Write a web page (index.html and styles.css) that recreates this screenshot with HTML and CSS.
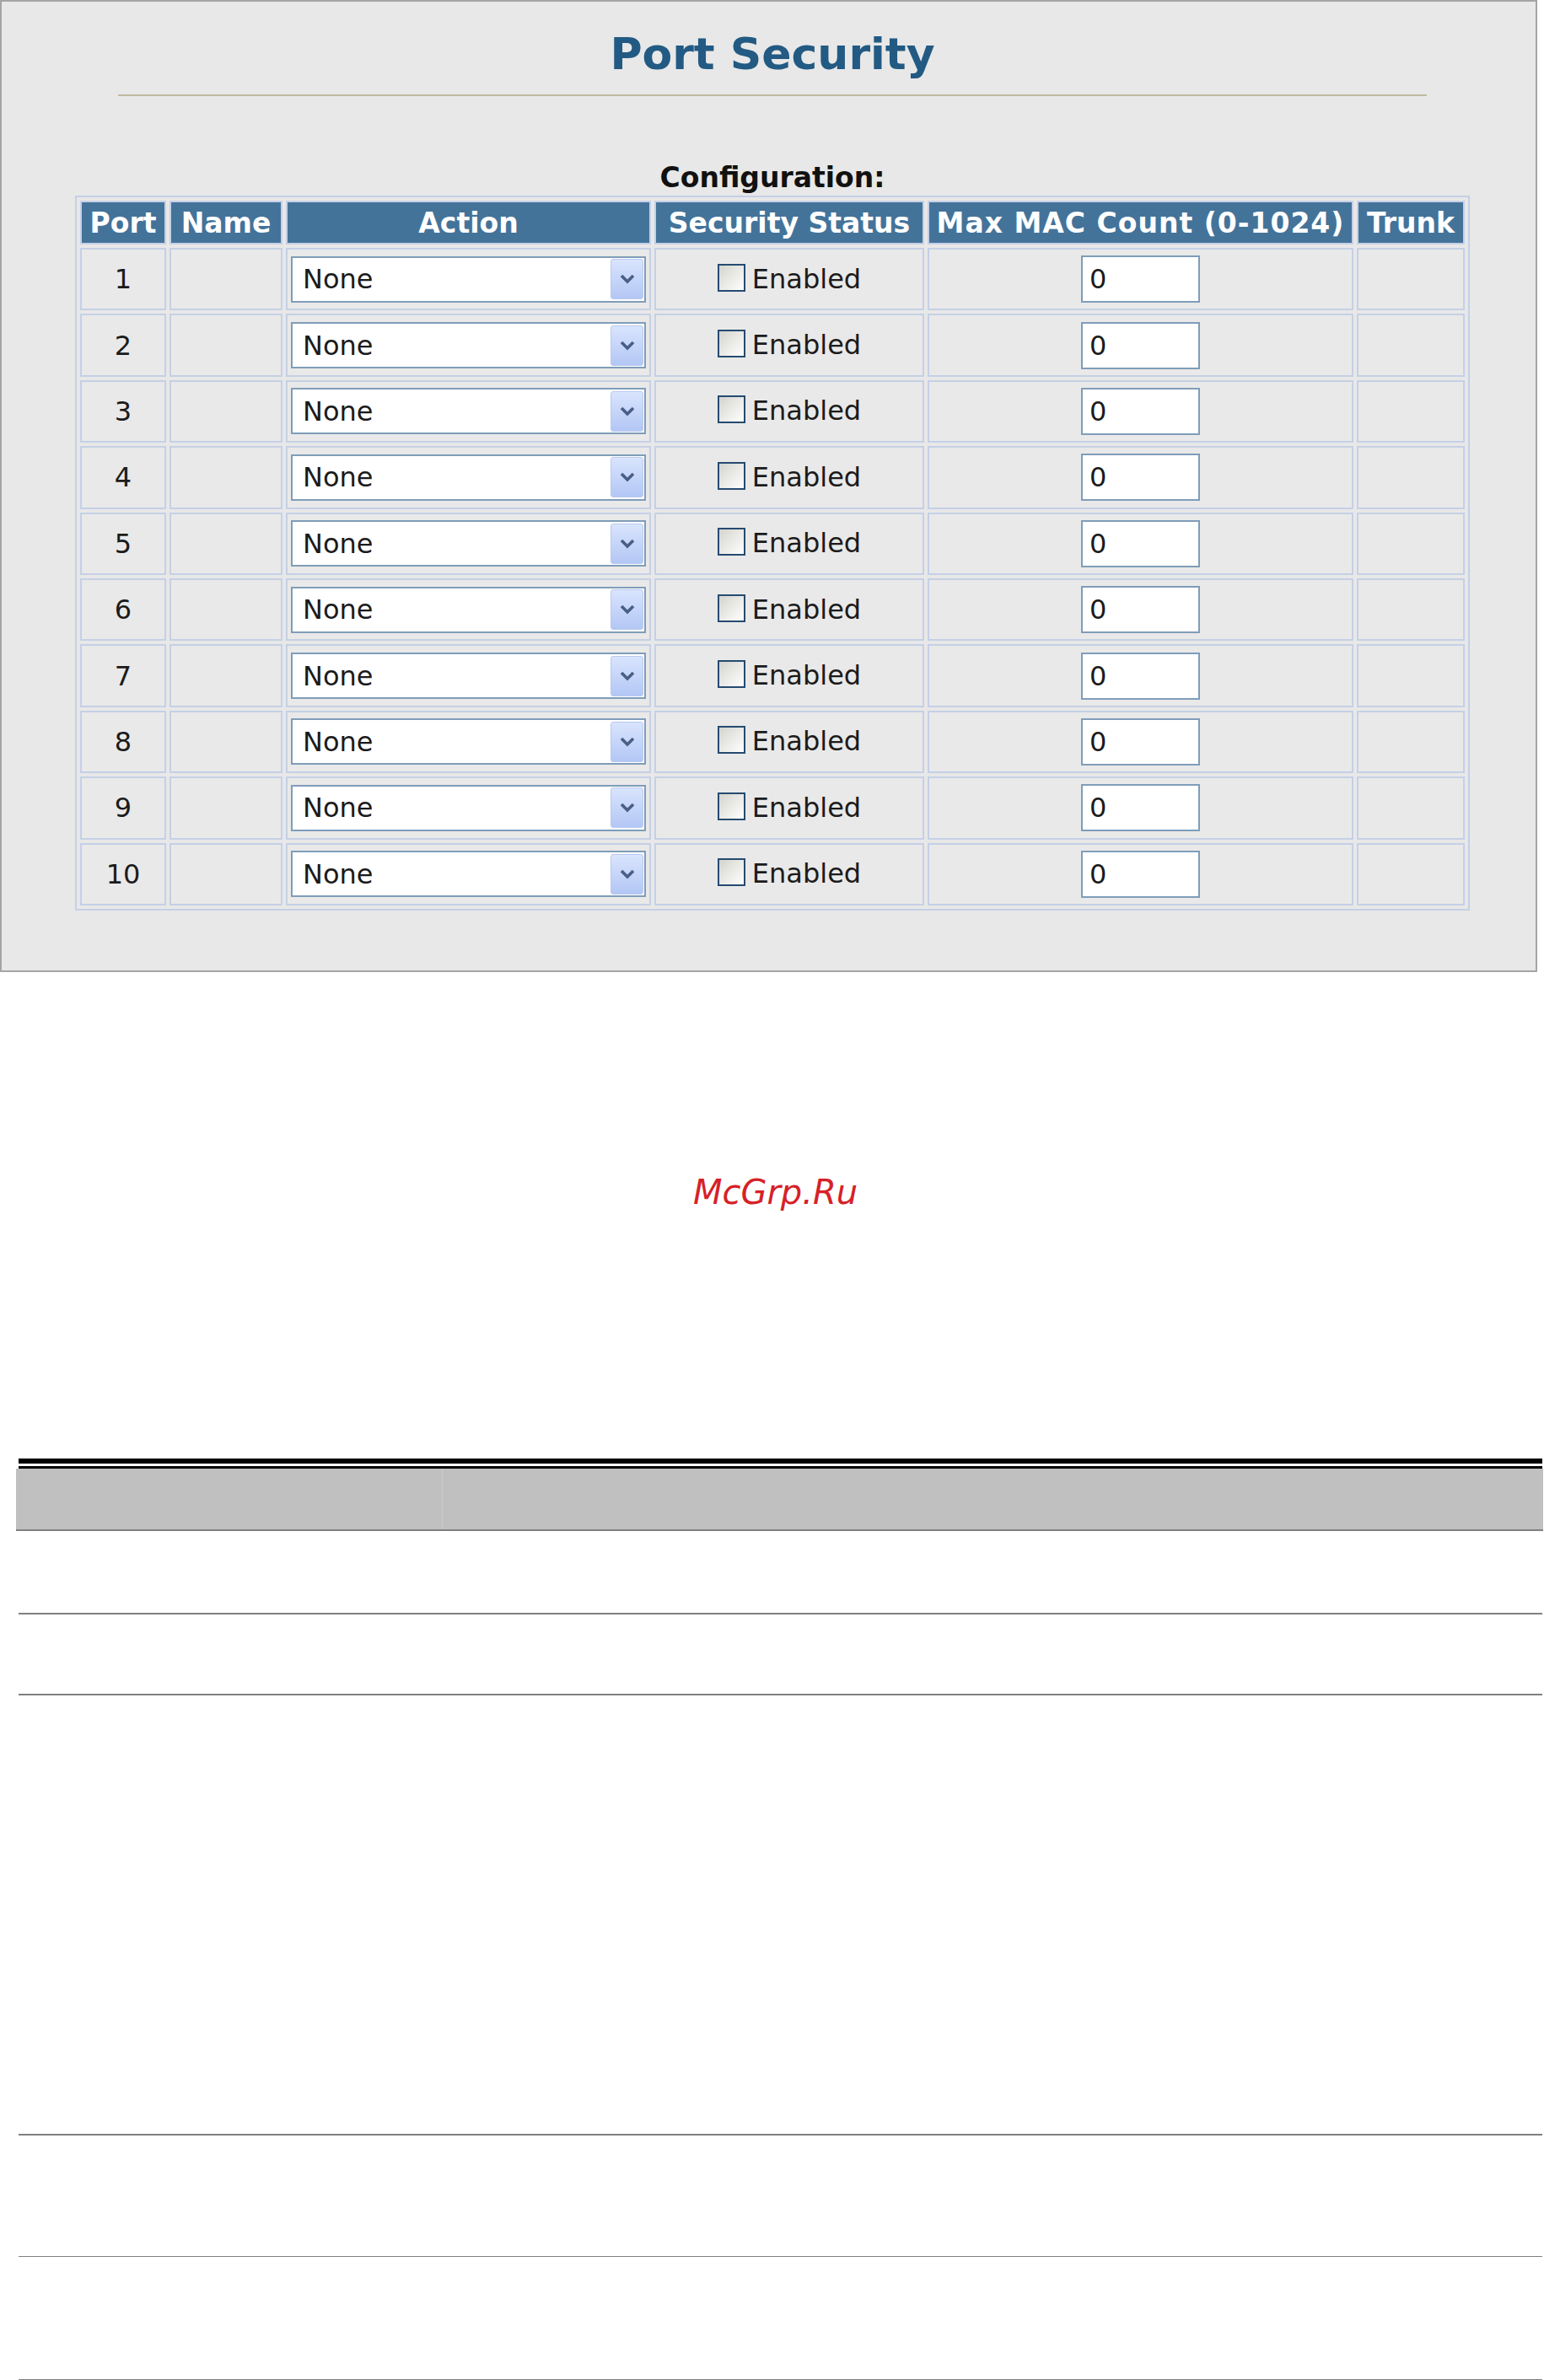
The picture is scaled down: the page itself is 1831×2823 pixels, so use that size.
FILE: index.html
```html
<!DOCTYPE html>
<html>
<head>
<meta charset="utf-8">
<title>Port Security</title>
<link rel="stylesheet" href="styles.css">
</head>
<body>
<div class="panel">
  <div class="content">
    <h1 class="title">Port Security</h1>
    <div class="rule"></div>
    <div class="caption">Configuration:</div>
    <table class="grid">
      <thead>
        <tr>
          <th class="c-port">Port</th>
          <th class="c-name">Name</th>
          <th class="c-action">Action</th>
          <th class="c-sec">Security Status</th>
          <th class="c-max">Max MAC Count (0-1024)</th>
          <th class="c-trunk">Trunk</th>
        </tr>
      </thead>
      <tbody id="rows">
        <tr><td>1</td><td></td><td><div class="select"><span class="sel-text">None</span><span class="dd"><svg width="18" height="12" viewBox="0 0 18 12"><path d="M2 2 L9 9 L16 2" fill="none" stroke="#4a5f86" stroke-width="3.6"/></svg></span></div></td><td><label class="chk"><input type="checkbox"><span>Enabled</span></label></td><td><input class="num" type="text" value="0"></td><td></td></tr>
        <tr><td>2</td><td></td><td><div class="select"><span class="sel-text">None</span><span class="dd"><svg width="18" height="12" viewBox="0 0 18 12"><path d="M2 2 L9 9 L16 2" fill="none" stroke="#4a5f86" stroke-width="3.6"/></svg></span></div></td><td><label class="chk"><input type="checkbox"><span>Enabled</span></label></td><td><input class="num" type="text" value="0"></td><td></td></tr>
        <tr><td>3</td><td></td><td><div class="select"><span class="sel-text">None</span><span class="dd"><svg width="18" height="12" viewBox="0 0 18 12"><path d="M2 2 L9 9 L16 2" fill="none" stroke="#4a5f86" stroke-width="3.6"/></svg></span></div></td><td><label class="chk"><input type="checkbox"><span>Enabled</span></label></td><td><input class="num" type="text" value="0"></td><td></td></tr>
        <tr><td>4</td><td></td><td><div class="select"><span class="sel-text">None</span><span class="dd"><svg width="18" height="12" viewBox="0 0 18 12"><path d="M2 2 L9 9 L16 2" fill="none" stroke="#4a5f86" stroke-width="3.6"/></svg></span></div></td><td><label class="chk"><input type="checkbox"><span>Enabled</span></label></td><td><input class="num" type="text" value="0"></td><td></td></tr>
        <tr><td>5</td><td></td><td><div class="select"><span class="sel-text">None</span><span class="dd"><svg width="18" height="12" viewBox="0 0 18 12"><path d="M2 2 L9 9 L16 2" fill="none" stroke="#4a5f86" stroke-width="3.6"/></svg></span></div></td><td><label class="chk"><input type="checkbox"><span>Enabled</span></label></td><td><input class="num" type="text" value="0"></td><td></td></tr>
        <tr><td>6</td><td></td><td><div class="select"><span class="sel-text">None</span><span class="dd"><svg width="18" height="12" viewBox="0 0 18 12"><path d="M2 2 L9 9 L16 2" fill="none" stroke="#4a5f86" stroke-width="3.6"/></svg></span></div></td><td><label class="chk"><input type="checkbox"><span>Enabled</span></label></td><td><input class="num" type="text" value="0"></td><td></td></tr>
        <tr><td>7</td><td></td><td><div class="select"><span class="sel-text">None</span><span class="dd"><svg width="18" height="12" viewBox="0 0 18 12"><path d="M2 2 L9 9 L16 2" fill="none" stroke="#4a5f86" stroke-width="3.6"/></svg></span></div></td><td><label class="chk"><input type="checkbox"><span>Enabled</span></label></td><td><input class="num" type="text" value="0"></td><td></td></tr>
        <tr><td>8</td><td></td><td><div class="select"><span class="sel-text">None</span><span class="dd"><svg width="18" height="12" viewBox="0 0 18 12"><path d="M2 2 L9 9 L16 2" fill="none" stroke="#4a5f86" stroke-width="3.6"/></svg></span></div></td><td><label class="chk"><input type="checkbox"><span>Enabled</span></label></td><td><input class="num" type="text" value="0"></td><td></td></tr>
        <tr><td>9</td><td></td><td><div class="select"><span class="sel-text">None</span><span class="dd"><svg width="18" height="12" viewBox="0 0 18 12"><path d="M2 2 L9 9 L16 2" fill="none" stroke="#4a5f86" stroke-width="3.6"/></svg></span></div></td><td><label class="chk"><input type="checkbox"><span>Enabled</span></label></td><td><input class="num" type="text" value="0"></td><td></td></tr>
        <tr><td>10</td><td></td><td><div class="select"><span class="sel-text">None</span><span class="dd"><svg width="18" height="12" viewBox="0 0 18 12"><path d="M2 2 L9 9 L16 2" fill="none" stroke="#4a5f86" stroke-width="3.6"/></svg></span></div></td><td><label class="chk"><input type="checkbox"><span>Enabled</span></label></td><td><input class="num" type="text" value="0"></td><td></td></tr>
      </tbody>
    </table>
  </div>
</div>

<div class="watermark">McGrp.Ru</div>

<div class="doc">
  <div class="doc-top"></div>
  <div class="doc-head">
    <div class="doc-hcell"></div>
    <div class="doc-hcell doc-hcell-2"></div>
  </div>
  <div class="doc-row r1"></div>
  <div class="doc-row r2"></div>
  <div class="doc-row r3"></div>
  <div class="doc-row r4"></div>
  <div class="doc-row r5"></div>
</div>
</body>
</html>
```

FILE: styles.css
```css
* { box-sizing: border-box; }

body {
  margin: 0;
  width: 1831px;
  background: #ffffff;
  font-family: "DejaVu Sans", Verdana, sans-serif;
}

.panel {
  width: 1823px;
  border: 2px solid #a5a5a5;
  background: #e8e8e8;
  padding: 32px 0 71px 87px;
}

.content {
  width: 1654px;
  display: flex;
  flex-direction: column;
  align-items: center;
}

.title {
  margin: 0;
  font-size: 52px;
  line-height: 60px;
  font-weight: bold;
  color: #225a83;
}

.rule {
  width: 1552px;
  height: 2px;
  margin-top: 18px;
  background: #bfb99f;
}

.caption {
  margin-top: 77px;
  font-size: 33px;
  line-height: 40px;
  font-weight: bold;
  color: #111111;
}

.grid {
  width: 1654px;
  margin-top: 1px;
  table-layout: fixed;
  border-collapse: separate;
  border-spacing: 4px;
  border: 2px solid #c5d0e6;
}

.grid thead tr { height: 52px; }
.grid tbody tr { height: 74.4px; }

.grid th {
  padding: 0;
  border: 2px solid #c5d0e6;
  background: #44739a;
  color: #ffffff;
  font-size: 33px;
  font-weight: bold;
  white-space: nowrap;
  text-align: center;
  overflow: visible;
}

.c-port { width: 102px; }
.c-name { width: 134px; }
.c-action { width: 433px; }
.c-sec { width: 320px; }
.c-max { width: 505px; letter-spacing: 1px; }
.c-trunk { width: 128px; }

.grid td {
  padding: 0;
  border: 2px solid #c5d0e6;
  background: #e9e9e9;
  text-align: center;
  vertical-align: middle;
  font-size: 32px;
  color: #1b1b1b;
}

.select {
  display: flex;
  align-items: center;
  width: 421px;
  height: 55px;
  margin: 0 auto;
  padding: 0 1px 0 12px;
  border: 2px solid #7f9db9;
  background: #ffffff;
  text-align: left;
}

.sel-text {
  font-size: 32px;
  color: #1b1b1b;
}

.dd {
  display: flex;
  align-items: center;
  justify-content: center;
  width: 39px;
  height: 48px;
  margin-left: auto;
  border: 1px solid #b9c9ef;
  border-radius: 3px;
  background: linear-gradient(#d9e4fd, #b3c7f5);
}

.chk {
  display: inline-flex;
  align-items: flex-end;
  gap: 8px;
  padding-top: 4px;
  font-size: 32px;
  line-height: 37px;
  color: #1b1b1b;
}

.chk input {
  appearance: none;
  -webkit-appearance: none;
  width: 33px;
  height: 33px;
  margin: 0 0 4px 0;
  border: 2px solid #264b70;
  background: linear-gradient(135deg, #d4d4ce, #ffffff);
}

.num {
  display: block;
  width: 141px;
  height: 56px;
  margin: 0 auto;
  padding: 0 0 0 8px;
  border: 2px solid #7f9db9;
  background: #ffffff;
  font-family: "DejaVu Sans", Verdana, sans-serif;
  font-size: 32px;
  color: #1b1b1b;
}

.watermark {
  margin-top: 238px;
  padding-left: 8px;
  text-align: center;
  font-size: 40px;
  line-height: 46px;
  font-style: oblique;
  color: #d62128;
}

.doc {
  width: 1807px;
  margin: 293px 0 0 22px;
}

.doc-top {
  height: 12px;
  border-top: 6px solid #000000;
  border-bottom: 3px solid #000000;
}

.doc-head {
  display: grid;
  grid-template-columns: 505px 1fr;
  height: 74px;
  margin: 0 -1px 0 -3px;
  background: #c0c0c0;
  border-bottom: 2px solid #808080;
}

.doc-hcell-2 { border-left: 1px solid #cacaca; }

.doc-row { border-bottom: 2px solid #808080; }
.r1 { height: 99px; }
.r2 { height: 96px; }
.r3 { height: 522px; }
.r4 { height: 144px; border-bottom-width: 1px; }
.r5 { height: 147px; }
```
